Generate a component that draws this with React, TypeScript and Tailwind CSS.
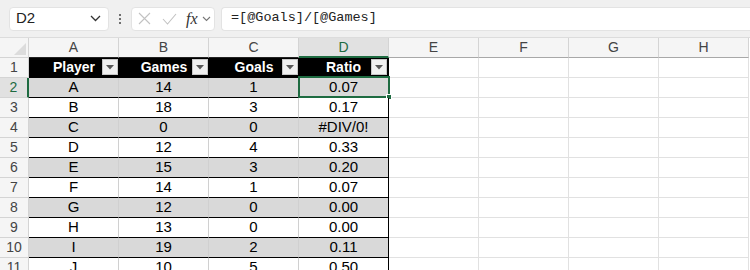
import React from 'react';

const COLS = ['A', 'B', 'C', 'D', 'E', 'F', 'G', 'H'];

const HEADERS = ['Player', 'Games', 'Goals', 'Ratio'];

const DATA: string[][] = [
  ['A', '14', '1', '0.07'],
  ['B', '18', '3', '0.17'],
  ['C', '0', '0', '#DIV/0!'],
  ['D', '12', '4', '0.33'],
  ['E', '15', '3', '0.20'],
  ['F', '14', '1', '0.07'],
  ['G', '12', '0', '0.00'],
  ['H', '13', '0', '0.00'],
  ['I', '19', '2', '0.11'],
  ['J', '10', '5', '0.50'],
];

const FilterButton = () => (
  <div className="absolute right-[1px] top-[1px] w-[16px] h-[16px] bg-[#f1f1f1] border border-[#c8c8c8] flex items-center justify-center">
    <svg width="8" height="5" viewBox="0 0 8 5">
      <path d="M0 0 L8 0 L4 4.5 Z" fill="#595959" />
    </svg>
  </div>
);

const FormulaBar = () => (
  <div className="h-[38px] bg-[#f0f0f0] flex items-center pl-[9px] border-b border-[#dcdcdc]">
    {/* Name box */}
    <div className="w-[100px] h-[24px] bg-white rounded-[4px] border border-[#e3e3e3] flex items-center justify-between pl-[6px] pr-[7px]">
      <span className="text-[15px] text-[#222]">D2</span>
      <svg width="11" height="7" viewBox="0 0 11 7">
        <path d="M1 1 L5.5 5.5 L10 1" stroke="#333" strokeWidth="1.3" fill="none" />
      </svg>
    </div>
    {/* dots */}
    <div className="w-[22px] flex flex-col items-center gap-[2px]">
      <span className="w-[2px] h-[2px] bg-[#444] rounded-full" />
      <span className="w-[2px] h-[2px] bg-[#444] rounded-full" />
      <span className="w-[2px] h-[2px] bg-[#444] rounded-full" />
    </div>
    {/* cancel / enter / fx */}
    <div className="w-[84px] h-[24px] bg-white rounded-[4px] border border-[#e3e3e3] flex items-center pl-[6px]">
      <svg width="13" height="13" viewBox="0 0 13 13">
        <path d="M1 1 L12 12 M12 1 L1 12" stroke="#c2c2c2" strokeWidth="1.1" fill="none" />
      </svg>
      <svg width="15" height="12" viewBox="0 0 15 12" className="ml-[11px]">
        <path d="M1 6 L5.5 11 L14 1" stroke="#c2c2c2" strokeWidth="1.1" fill="none" />
      </svg>
      <span className="ml-[9px] text-[16px] italic text-[#333] leading-none" style={{ fontFamily: '"Liberation Serif", serif' }}>
        fx
      </span>
      <svg width="9" height="6" viewBox="0 0 9 6" className="ml-[4px]">
        <path d="M1 1 L4.5 4.5 L8 1" stroke="#777" strokeWidth="1.1" fill="none" />
      </svg>
    </div>
    {/* formula */}
    <div className="ml-[6px] flex-1 h-[24px] bg-white rounded-l-[4px] border border-r-0 border-[#e3e3e3] flex items-center pl-[9px]">
      <span className="text-[13.5px] text-[#222]" style={{ fontFamily: '"Liberation Mono", monospace' }}>
        =[@Goals]/[@Games]
      </span>
    </div>
  </div>
);

export default function App() {
  return (
    <div className="w-[750px] h-[270px] overflow-hidden bg-white" style={{ fontFamily: '"Liberation Sans", Arial, sans-serif' }}>
      <FormulaBar />

      <div className="grid grid-cols-[29px_repeat(8,90px)] auto-rows-[20px]">
        {/* column headers */}
        <div className="relative bg-[#f5f5f5] border-r border-b border-[#d4d4d4]">
          <svg width="12" height="12" viewBox="0 0 12 12" className="absolute right-[2px] bottom-[2px]">
            <path d="M12 0 L12 12 L0 12 Z" fill="#dcdcdc" />
          </svg>
        </div>
        {COLS.map((c) =>
          c === 'D' ? (
            <div
              key={c}
              className="bg-[#e1e1e1] border-r border-[#d4d4d4] border-b-2 border-b-[#1e6b41] flex items-center justify-center text-[14px] text-[#1e6b41]"
            >
              {c}
            </div>
          ) : (
            <div
              key={c}
              className={`bg-[#f5f5f5] border-r border-[#d4d4d4] border-b ${
                c <= 'C' ? 'border-b-[#222]' : 'border-b-[#a8a8a8]'
              } flex items-center justify-center text-[14px] text-[#444]`}
            >
              {c}
            </div>
          )
        )}

        {/* row 1: table header */}
        <div className="bg-[#f5f5f5] border-r border-b border-[#d4d4d4] flex items-center justify-center text-[14px] text-[#444]">
          1
        </div>
        {HEADERS.map((h, i) => (
          <div
            key={h}
            className={`relative bg-black border-b border-black ${i === 3 ? 'border-r border-r-black' : ''} flex items-center justify-center text-[14px] font-bold text-white`}
          >
            {h}
            <FilterButton />
          </div>
        ))}
        {COLS.slice(4).map((c) => (
          <div key={c} className="border-r border-b border-[#e1e1e1]" />
        ))}

        {/* data rows */}
        {DATA.map((row, r) => {
          const n = r + 2;
          const band = n % 2 === 0 ? 'bg-[#d9d9d9]' : 'bg-white';
          return (
            <React.Fragment key={n}>
              <div
                className={`flex items-center justify-center text-[14px] border-b border-[#d4d4d4] ${
                  n === 2
                    ? 'bg-[#e1e1e1] text-[#1e6b41] border-r-2 border-r-[#1e6b41]'
                    : 'bg-[#f5f5f5] text-[#444] border-r border-r-[#d4d4d4]'
                }`}
              >
                {n}
              </div>
              {row.map((v, i) => (
                <div
                  key={i}
                  className={`relative ${band} border-b border-b-black border-r ${
                    i === 3 ? 'border-r-black' : 'border-r-[#d0d0d0]'
                  } flex items-center justify-center text-[15px] text-black`}
                >
                  {v}
                  {n === 2 && i === 3 && (
                    <div className="absolute left-[-1px] top-[-2px] right-[-2px] bottom-[-1px] border-2 border-[#1e6b41]">
                      <div className="absolute right-[-4px] bottom-[-4px] w-[6px] h-[6px] bg-[#1e6b41] border border-white" />
                    </div>
                  )}
                </div>
              ))}
              {COLS.slice(4).map((c) => (
                <div key={c} className="border-r border-b border-[#e1e1e1]" />
              ))}
            </React.Fragment>
          );
        })}
      </div>
    </div>
  );
}
